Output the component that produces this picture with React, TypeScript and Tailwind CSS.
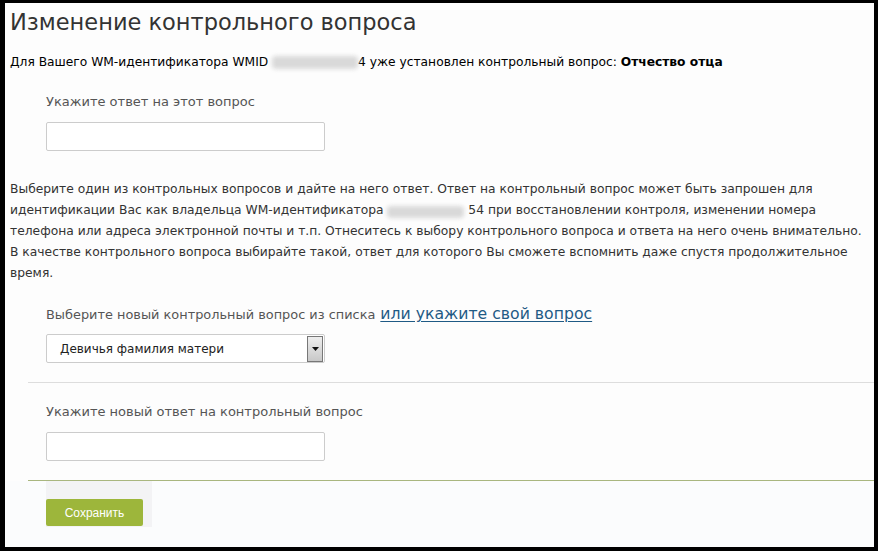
export default function App() {
  const sans = { fontFamily: '"DejaVu Sans", Verdana, sans-serif' };

  return (
    <div className="h-[551px] w-[878px] overflow-hidden bg-black pb-[4px] pl-[5px] pr-[4px] pt-[3px]">
      <div className="h-full w-full overflow-hidden bg-[#fdfdfd]" style={sans}>
        <div className="pl-[5px] pr-[4px]">
          <h1 className="pt-[4px] text-[22.5px] leading-[30px] text-[#333]">Изменение контрольного вопроса</h1>

          <p className="mt-[16px] flex items-center text-[12.25px] leading-[18px] text-black">
            Для Вашего WM-идентификатора WMID&nbsp;
            <span className="inline-block h-[13px] w-[86px] rounded-sm bg-[#d9d9d9] blur-[2px]" />
            4 уже установлен контрольный вопрос:&nbsp;<b>Отчество отца</b>
          </p>
        </div>

        <div className="pl-[41px] pt-[22px]">
          <div className="text-[13px] leading-[18px] text-[#555]">Укажите ответ на этот вопрос</div>
          <input
            type="text"
            className="mt-[11px] block h-[29px] w-[279px] rounded-[2px] border border-[#ccc] bg-white"
          />
        </div>

        <p className="mt-[28px] whitespace-nowrap pl-[5px] pr-[4px] text-[12.3px] leading-[21px] text-[#333]">
          Выберите один из контрольных вопросов и дайте на него ответ. Ответ на контрольный вопрос может быть запрошен для
          <br />
          идентификации Вас как владельца WM-идентификатора{' '}
          <span className="inline-block h-[12px] w-[77px] translate-y-[1px] rounded-sm bg-[#d9d9d9] align-middle blur-[2px]" />{' '}
          54 при восстановлении контроля, изменении номера
          <br />
          телефона или адреса электронной почты и т.п. Отнеситесь к выбору контрольного вопроса и ответа на него очень
          внимательно.
          <br />
          В качестве контрольного вопроса выбирайте такой, ответ для которого Вы сможете вспомнить даже спустя
          продолжительное
          <br />
          время.
        </p>

        <div className="pl-[41px] pt-[19px]">
          <div className="flex items-baseline text-[12.9px] leading-[22px] text-[#555]">
            <span>Выберите новый контрольный вопрос из списка</span>
            <a href="#" className="ml-[5px] text-[15.7px] text-[#1f5a85] underline underline-offset-2">
              или укажите свой вопрос
            </a>
          </div>
          <div className="mt-[8px] flex h-[29px] w-[279px] items-center rounded-[2px] border border-[#ccc] bg-white">
            <span className="flex-1 pl-[13px] text-[12px] text-[#222]">Девичья фамилия матери</span>
            <span className="mr-[1px] flex h-[26px] w-[16px] items-center justify-center border border-[#777] bg-gradient-to-b from-[#eee] to-[#c8c8c8]">
              <svg width="7" height="4" viewBox="0 0 7 4">
                <path d="M0 0h7L3.5 4z" fill="#111" />
              </svg>
            </span>
          </div>
        </div>

        <div className="ml-[23px] mt-[19px] border-t border-[#ddd]" />

        <div className="pl-[41px] pt-[20px]">
          <div className="text-[13px] leading-[18px] text-[#555]">Укажите новый ответ на контрольный вопрос</div>
          <input
            type="text"
            className="mt-[11px] block h-[29px] w-[279px] rounded-[2px] border border-[#ccc] bg-white"
          />
        </div>

        <div className="ml-[23px] mt-[19px] border-t border-[#a9b67f]" />

        <div className="h-full bg-[#fbfcfd] pl-[41px]">
          <div className="h-[46px] w-[106px] bg-[#f3f3f5] pt-[18px]">
            <button
              type="button"
              className="h-[27px] w-[97px] rounded-[2px] bg-[#9db63b] text-[12px] text-white"
              style={{ fontFamily: '"Liberation Sans", Arial, sans-serif' }}
            >
              Сохранить
            </button>
          </div>
        </div>
      </div>
    </div>
  );
}
